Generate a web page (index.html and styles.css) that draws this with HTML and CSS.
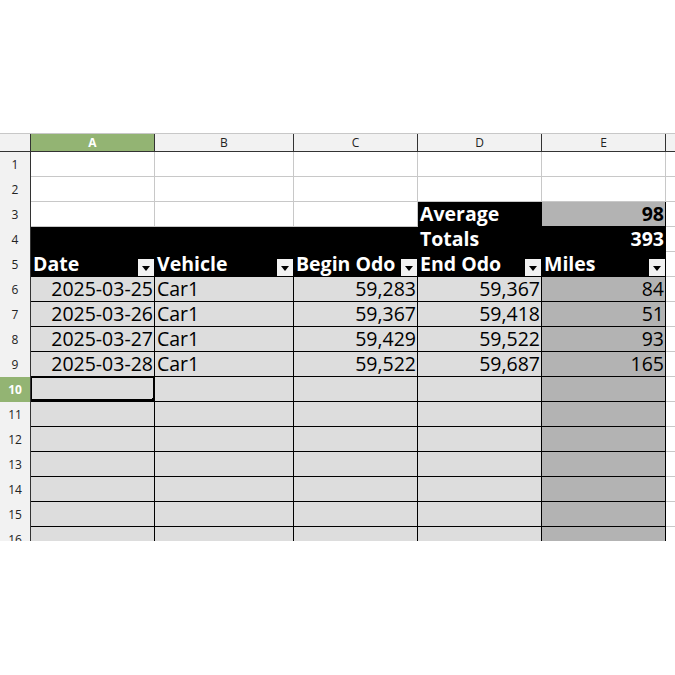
FILE: index.html
```html
<!DOCTYPE html>
<html lang="en">
<head>
    <meta charset="UTF-8">
    <title>Mileage</title>
    <link rel="stylesheet" href="styles.css">
</head>
<body>
    <div class="sheet">
        <!-- column headers -->
        <div class="hd corner"></div>
        <div class="hd sel">A</div>
        <div class="hd">B</div>
        <div class="hd">C</div>
        <div class="hd">D</div>
        <div class="hd">E</div>
        <div class="hd rest"></div>

        <!-- rows 1-3 -->
        <div class="rh">1</div>
        <div class="c"></div><div class="c"></div><div class="c"></div><div class="c"></div><div class="c"></div><div class="c rest"></div>
        <div class="rh">2</div>
        <div class="c"></div><div class="c"></div><div class="c"></div><div class="c"></div><div class="c"></div><div class="c rest"></div>
        <div class="rh">3</div>
        <div class="c"></div><div class="c"></div><div class="c"></div>
        <div class="c dark">Average</div>
        <div class="c sum num">98</div>
        <div class="c rest"></div>

        <!-- row 4 -->
        <div class="rh">4</div>
        <div class="c dark"></div><div class="c dark"></div><div class="c dark"></div>
        <div class="c dark">Totals</div>
        <div class="c dark num">393</div>
        <div class="c rest"></div>

        <!-- row 5: table header with filter buttons -->
        <div class="rh">5</div>
        <div class="c dark th">Date<span class="filter"></span></div>
        <div class="c dark th">Vehicle<span class="filter"></span></div>
        <div class="c dark th">Begin Odo<span class="filter"></span></div>
        <div class="c dark th">End Odo<span class="filter"></span></div>
        <div class="c dark th">Miles<span class="filter"></span></div>
        <div class="c rest"></div>

        <div class="rh">6</div>
        <div class="c d num">2025-03-25</div><div class="c d">Car1</div><div class="c d num">59,283</div><div class="c d num">59,367</div><div class="c m num">84</div><div class="c rest"></div>
        <div class="rh">7</div>
        <div class="c d num">2025-03-26</div><div class="c d">Car1</div><div class="c d num">59,367</div><div class="c d num">59,418</div><div class="c m num">51</div><div class="c rest"></div>
        <div class="rh">8</div>
        <div class="c d num">2025-03-27</div><div class="c d">Car1</div><div class="c d num">59,429</div><div class="c d num">59,522</div><div class="c m num">93</div><div class="c rest"></div>
        <div class="rh">9</div>
        <div class="c d num">2025-03-28</div><div class="c d">Car1</div><div class="c d num">59,522</div><div class="c d num">59,687</div><div class="c m num">165</div><div class="c rest"></div>

        <div class="rh sel">10</div>
        <div class="c d active"><span class="handle"></span></div><div class="c d"></div><div class="c d"></div><div class="c d"></div><div class="c m"></div><div class="c rest"></div>
        <div class="rh">11</div>
        <div class="c d"></div><div class="c d"></div><div class="c d"></div><div class="c d"></div><div class="c m"></div><div class="c rest"></div>
        <div class="rh">12</div>
        <div class="c d"></div><div class="c d"></div><div class="c d"></div><div class="c d"></div><div class="c m"></div><div class="c rest"></div>
        <div class="rh">13</div>
        <div class="c d"></div><div class="c d"></div><div class="c d"></div><div class="c d"></div><div class="c m"></div><div class="c rest"></div>
        <div class="rh">14</div>
        <div class="c d"></div><div class="c d"></div><div class="c d"></div><div class="c d"></div><div class="c m"></div><div class="c rest"></div>
        <div class="rh">15</div>
        <div class="c d"></div><div class="c d"></div><div class="c d"></div><div class="c d"></div><div class="c m"></div><div class="c rest"></div>
        <div class="rh">16</div>
        <div class="c d"></div><div class="c d"></div><div class="c d"></div><div class="c d"></div><div class="c m"></div><div class="c rest"></div>
    </div>
</body>
</html>
```

FILE: styles.css
```css
body {
    margin: 0;
    padding-top: 133px;
    background-color: #fff;
    font-family: "Open Sans", "DejaVu Sans", sans-serif;
}
.sheet {
    display: grid;
    grid-template-columns: 31px 124px 139px 124px 124px 124px 1fr;
    grid-template-rows: 18px;
    grid-auto-rows: 25px;
    height: 408px;
    overflow: hidden;
    border-top: 1px solid #c8c8c8;
    box-sizing: border-box;
}
.sheet > div {
    box-sizing: border-box;
}
/* headers */
.hd {
    background-color: #f2f2f2;
    border-right: 1px solid #333;
    border-bottom: 1px solid #333;
    font-size: 12px;
    color: #222;
    text-align: center;
    line-height: 17px;
}
.hd.rest {
    border-right: none;
}
.rh {
    background-color: #f2f2f2;
    border-right: 1px solid #333;
    font-size: 12px;
    color: #222;
    display: flex;
    align-items: center;
    justify-content: center;
}
.sel {
    background-color: #93b473;
    color: #fff;
    font-weight: bold;
}
/* cells */
.c {
    border-right: 1px solid #c8c8c8;
    border-bottom: 1px solid #c8c8c8;
    font-size: 19.5px;
    line-height: 24px;
    padding: 0 1px 0 2px;
    white-space: nowrap;
    position: relative;
}
.c.rest {
    border-right: none;
}
.num {
    text-align: right;
}
.dark {
    background-color: #000;
    color: #fff;
    font-weight: bold;
    border-color: #000;
}
.sum {
    background-color: #b3b3b3;
    color: #000;
    font-weight: bold;
    border: 1px solid #000;
    border-left: none;
    border-top: none;
}
.th {
    display: flex;
    justify-content: space-between;
    align-items: flex-end;
    padding-right: 0;
}
.filter {
    width: 16px;
    height: 17px;
    background-color: #f2f2f2;
    position: relative;
    flex-shrink: 0;
}
.filter::after {
    content: "";
    position: absolute;
    left: 4px;
    top: 7px;
    border-left: 4px solid transparent;
    border-right: 4px solid transparent;
    border-top: 5px solid #000;
}
.d {
    background-color: #dddddd;
    color: #000;
    border-color: #000;
}
.m {
    background-color: #b3b3b3;
    color: #000;
    border-color: #000;
}
.active {
    box-shadow: inset 0 0 0 1px #000;
    border-bottom-width: 2px;
}
.handle {
    position: absolute;
    right: -4px;
    bottom: -4px;
    width: 6px;
    height: 6px;
    background-color: #000;
}
```
